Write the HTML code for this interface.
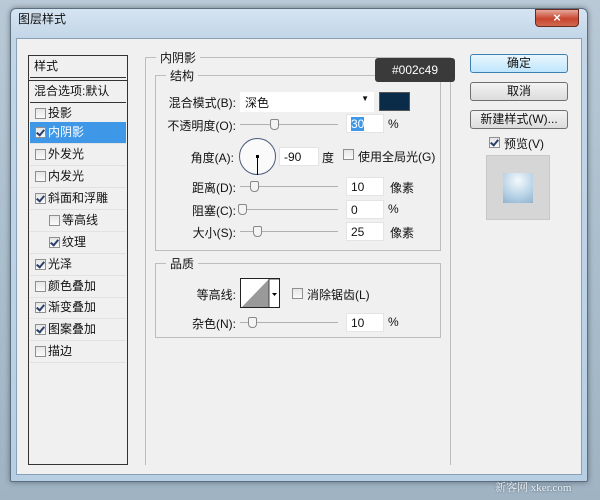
<!DOCTYPE html>
<html><head><meta charset="utf-8"><style>
*{box-sizing:border-box;margin:0;padding:0}
body{width:600px;height:500px;overflow:hidden;background:linear-gradient(180deg,#b9c9d6,#a8bccb 60%,#9fb3c3);font:12px "Liberation Sans","Noto Sans CJK SC",sans-serif;color:#111;position:relative}
.a{position:absolute}
.win{left:10px;top:8px;width:578px;height:474px;border:1px solid #5c6f80;border-radius:6px 6px 2px 2px;background:linear-gradient(180deg,#d5e4f1,#c2d6e8 30px,#b8cfe3);box-shadow:0 0 6px rgba(0,0,0,.4)}
.client{left:16px;top:38px;width:566px;height:437px;background:#f0f0f0;border:1px solid #8aa0b4}
.cb{position:absolute;width:11px;height:11px;border:1px solid #8f8f8f;background:linear-gradient(#e6e6e6,#fafafa)}
.cb.c::after{content:"";position:absolute;left:2px;top:0px;width:3px;height:6px;border:solid #2a3f6a;border-width:0 2px 2px 0;transform:rotate(40deg)}
.li{position:absolute;left:1px;width:96px;height:22px;border-bottom:1px solid #e2e2e2;line-height:21px;font-size:12px}
.grp{border:1px solid #bdbdbd}
.lg{background:#f0f0f0;padding:0 4px;font-size:12px}
.lab{position:absolute;text-align:right;width:100px}
.sl{position:absolute;height:1px;background:#b0b0b0;width:98px}
.th{position:absolute;width:9px;height:11px;border:1px solid #888;border-radius:2px 2px 4px 4px;background:#f4f4f4;top:-5px}
.in{position:absolute;width:38px;height:19px;background:#fff;border:1px solid #e4e4e4;padding-left:4px;line-height:18px}
.btn{position:absolute;left:470px;width:98px;height:19px;border:1px solid #707070;border-radius:3px;background:linear-gradient(#f3f3f3,#dcdcdc);text-align:center;line-height:17px}
</style></head><body>
<div class="a win"></div>
<div class="a" style="left:18px;top:10px;font-size:12px">图层样式</div>
<div class="a" style="left:535px;top:9px;width:44px;height:18px;border:1px solid #6b2a20;border-radius:0 0 4px 4px;background:linear-gradient(#e6a89c,#c8452f 55%,#d06a4f);color:#fff;text-align:center;font-weight:bold;line-height:16px;font-size:13px">×</div>
<div class="a client"></div>

<!-- list -->
<div class="a" style="left:28px;top:55px;width:100px;height:410px;border:1px solid #333;background:#f0f0f0">
 <div class="li" style="top:0;height:22px;border-bottom:1px solid #333;padding-left:4px">样式</div>
 <div class="a" style="left:0;top:22px;width:98px;height:3px;border-bottom:1px solid #333"></div>
 <div class="li" style="top:25px;padding-left:4px;border-bottom:1px solid #333">混合选项:默认</div>
 <div class="li" style="top:47px;padding-left:18px"><span class="cb" style="left:5px;top:5px"></span>投影</div>
 <div class="li" style="top:66px;padding-left:18px;background:#3f97e8;color:#fff"><span class="cb c" style="left:5px;top:5px"></span>内阴影</div>
 <div class="li" style="top:88px;padding-left:18px"><span class="cb" style="left:5px;top:5px"></span>外发光</div>
 <div class="li" style="top:110px;padding-left:18px"><span class="cb" style="left:5px;top:5px"></span>内发光</div>
 <div class="li" style="top:132px;padding-left:18px"><span class="cb c" style="left:5px;top:5px"></span>斜面和浮雕</div>
 <div class="li" style="top:154px;padding-left:32px"><span class="cb" style="left:19px;top:5px"></span>等高线</div>
 <div class="li" style="top:176px;padding-left:32px"><span class="cb c" style="left:19px;top:5px"></span>纹理</div>
 <div class="li" style="top:198px;padding-left:18px"><span class="cb c" style="left:5px;top:5px"></span>光泽</div>
 <div class="li" style="top:220px;padding-left:18px"><span class="cb" style="left:5px;top:5px"></span>颜色叠加</div>
 <div class="li" style="top:241px;padding-left:18px"><span class="cb c" style="left:5px;top:5px"></span>渐变叠加</div>
 <div class="li" style="top:263px;padding-left:18px"><span class="cb c" style="left:5px;top:5px"></span>图案叠加</div>
 <div class="li" style="top:285px;padding-left:18px"><span class="cb" style="left:5px;top:5px"></span>描边</div>
</div>

<!-- groups -->
<div class="a grp" style="left:145px;top:57px;width:306px;height:408px;border-bottom:none"></div>
<div class="a lg" style="left:156px;top:49px">内阴影</div>
<div class="a grp" style="left:155px;top:75px;width:286px;height:176px"></div>
<div class="a lg" style="left:166px;top:67px">结构</div>
<div class="a grp" style="left:155px;top:263px;width:286px;height:75px"></div>
<div class="a lg" style="left:166px;top:255px">品质</div>

<!-- structure -->
<div class="lab" style="left:136px;top:94px">混合模式(B):</div>
<div class="a" style="left:240px;top:92px;width:134px;height:20px;background:#fff;padding:2px 5px">深色<span class="a" style="right:5px;top:2px;font-size:8px">▼</span></div>
<div class="a" style="left:379px;top:92px;width:31px;height:19px;background:#0b2c49;border:1px solid #555"></div>
<div class="a" style="left:375px;top:58px;width:80px;height:24px;background:#3a3a3a;border-radius:3px;color:#fff;line-height:24px;text-align:center;font-size:12px">#002c49</div>

<div class="lab" style="left:136px;top:117px">不透明度(O):</div>
<div class="sl" style="left:240px;top:124px"><div class="th" style="left:30px"></div></div>
<div class="in" style="left:346px;top:114px"><span style="background:#3f97e8;color:#fff">30</span></div>
<div class="a" style="left:388px;top:117px">%</div>

<div class="lab" style="left:134px;top:149px">角度(A):</div>
<div class="a" style="left:239px;top:138px;width:37px;height:37px;border:1px solid #4a5a7a;border-radius:50%;background:#fafafa"></div>
<div class="a" style="left:256px;top:155px;width:3px;height:3px;background:#000"></div>
<div class="a" style="left:257px;top:157px;width:1px;height:18px;background:#000"></div>
<div class="in" style="left:279px;top:147px;width:40px">-90</div>
<div class="a" style="left:322px;top:149px">度</div>
<span class="cb" style="left:343px;top:149px"></span>
<div class="a" style="left:358px;top:148px">使用全局光(G)</div>

<div class="lab" style="left:136px;top:179px">距离(D):</div>
<div class="sl" style="left:240px;top:186px"><div class="th" style="left:10px"></div></div>
<div class="in" style="left:346px;top:177px">10</div>
<div class="a" style="left:390px;top:179px">像素</div>

<div class="lab" style="left:136px;top:202px">阻塞(C):</div>
<div class="sl" style="left:240px;top:209px"><div class="th" style="left:-2px"></div></div>
<div class="in" style="left:346px;top:200px">0</div>
<div class="a" style="left:388px;top:202px">%</div>

<div class="lab" style="left:136px;top:224px">大小(S):</div>
<div class="sl" style="left:240px;top:231px"><div class="th" style="left:13px"></div></div>
<div class="in" style="left:346px;top:222px">25</div>
<div class="a" style="left:390px;top:224px">像素</div>

<!-- quality -->
<div class="lab" style="left:136px;top:286px">等高线:</div>
<div class="a" style="left:240px;top:278px;width:40px;height:30px;border:1px solid #222;background:#fff;overflow:hidden">
<svg width="40" height="30" style="position:absolute;left:0;top:0"><polygon points="0,29 28,0 28,29" fill="#999"/><rect x="28" y="0" width="11" height="29" fill="#fff" stroke="#444"/><polygon points="31,14 36,14 33.5,17" fill="#000"/></svg></div>
<span class="cb" style="left:292px;top:288px"></span>
<div class="a" style="left:307px;top:286px">消除锯齿(L)</div>
<div class="lab" style="left:136px;top:315px">杂色(N):</div>
<div class="sl" style="left:240px;top:322px"><div class="th" style="left:8px"></div></div>
<div class="in" style="left:346px;top:313px">10</div>
<div class="a" style="left:388px;top:315px">%</div>

<!-- buttons -->
<div class="btn" style="top:54px;border-color:#3c7fb1;background:linear-gradient(#eaf6fd,#bee6fd)">确定</div>
<div class="btn" style="top:82px">取消</div>
<div class="btn" style="top:110px">新建样式(W)...</div>
<span class="cb c" style="left:489px;top:137px"></span>
<div class="a" style="left:504px;top:135px">预览(V)</div>
<div class="a" style="left:486px;top:155px;width:64px;height:65px;background:#d6d6d6;border:1px solid #c8c8c8"></div>
<div class="a" style="left:503px;top:173px;width:30px;height:30px;background:radial-gradient(circle at 50% 25%,#f4f9fd,#b7d2e6 60%,#8fb3cf)"></div>

<div class="a" style="left:495px;top:479px;font:11px 'Liberation Serif','Noto Serif CJK SC',serif;color:#eef3f6;text-shadow:0 0 2px #456">新客网 xker.com</div>
</body></html>
